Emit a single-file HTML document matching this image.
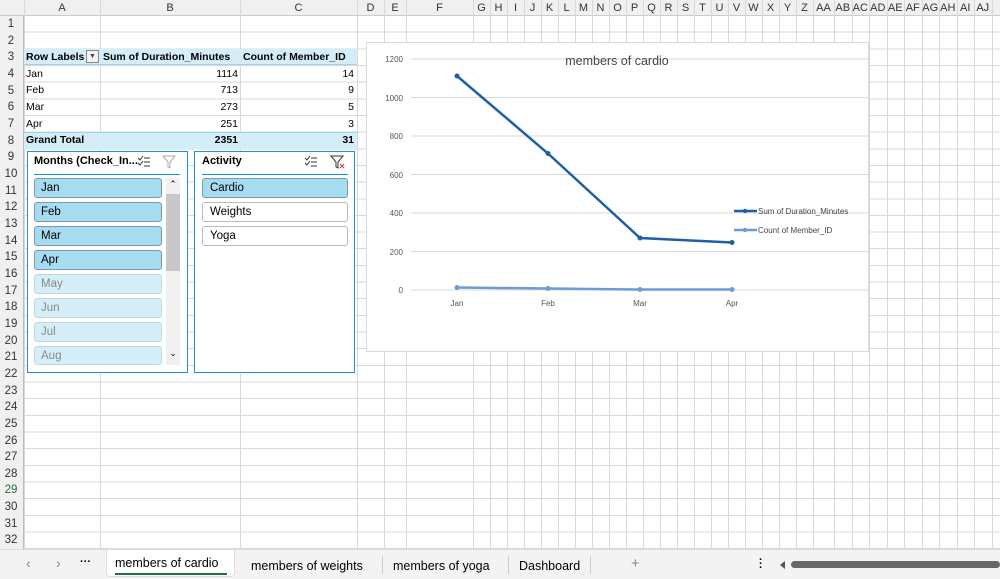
<!DOCTYPE html>
<html><head><meta charset="utf-8"><style>
*{margin:0;padding:0;box-sizing:border-box}
body{width:1000px;height:579px;overflow:hidden;background:#fff;font-family:"Liberation Sans",Arial,sans-serif;position:relative;font-size:11px;color:#000}
.a{position:absolute}
#grid{position:absolute;left:24px;top:16px;width:976px;height:533px;background:repeating-linear-gradient(to bottom,transparent 0,transparent 15.66px,#d9d9d9 15.66px,#d9d9d9 16.66px)}
.vl{position:absolute;top:0;width:1px;height:549px;background:#d9d9d9}
.ch{position:absolute;top:0;height:16px;line-height:16px;text-align:center;font-size:11px;color:#333}
.rh{position:absolute;left:0;width:22px;text-align:center;font-size:11.5px;color:#333;height:16.66px;line-height:16.66px}
.pt{position:absolute;font-size:10.5px;height:16px;line-height:16px}
.btn{position:absolute;left:34px;width:128px;height:20px;border:1px solid #7a9aa6;border-radius:3px;background:#a6dcf2;font-size:11.5px;line-height:18px;padding-left:6px}
.btn.o{background:#d5eff9;border-color:#c2d8e0;color:#888}
.btn2{position:absolute;left:202px;width:146px;height:20px;border:1px solid #bbb;border-radius:3px;background:#fff;font-size:11.5px;line-height:18px;padding-left:7px}
</style></head><body>
<div class="a" style="left:0;top:0;width:1000px;height:16px;background:#f0f0f0;border-bottom:1px solid #ccc"></div>
<div class="a" style="left:0;top:16px;width:24px;height:533px;background:#f0f0f0;border-right:1px solid #bbb"></div>
<div id="grid"></div>
<div id="cols"></div>
<div id="rows"></div>
<!-- pivot -->
<div class="a" style="left:24px;top:49px;width:333px;height:16px;background:#d4eef9;border-bottom:1px solid #9dd3ea"></div>
<div class="a" style="left:24px;top:132px;width:333px;height:17px;background:#d4eef9;border-top:1px solid #9dd3ea"></div>
<div class="pt" style="left:26px;top:49px;font-weight:bold">Row Labels</div>
<div class="a" style="left:86px;top:50px;width:13px;height:13px;border:1px solid #888;background:#f4f4f4;font-size:7px;text-align:center;line-height:12px;color:#444">▼</div>
<div class="pt" style="left:103px;top:49px;font-weight:bold">Sum of Duration_Minutes</div>
<div class="pt" style="left:243px;top:49px;font-weight:bold">Count of Member_ID</div>
<div class="pt" style="left:26px;top:66px">Jan</div><div class="pt" style="left:180px;width:58px;text-align:right;top:66px">1114</div><div class="pt" style="left:300px;width:54px;text-align:right;top:66px">14</div>
<div class="pt" style="left:26px;top:82px">Feb</div><div class="pt" style="left:180px;width:58px;text-align:right;top:82px">713</div><div class="pt" style="left:300px;width:54px;text-align:right;top:82px">9</div>
<div class="pt" style="left:26px;top:99px">Mar</div><div class="pt" style="left:180px;width:58px;text-align:right;top:99px">273</div><div class="pt" style="left:300px;width:54px;text-align:right;top:99px">5</div>
<div class="pt" style="left:26px;top:116px">Apr</div><div class="pt" style="left:180px;width:58px;text-align:right;top:116px">251</div><div class="pt" style="left:300px;width:54px;text-align:right;top:116px">3</div>
<div class="pt" style="left:26px;top:132px;font-weight:bold">Grand Total</div><div class="pt" style="left:180px;width:58px;text-align:right;top:132px;font-weight:bold">2351</div><div class="pt" style="left:300px;width:54px;text-align:right;top:132px;font-weight:bold">31</div>
<!-- slicer months -->
<div class="a" style="left:27px;top:151px;width:161px;height:222px;background:#fff;border:1px solid #1d93d0"></div>
<div class="a" style="left:34px;top:155px;font-weight:bold;font-size:11px">Months (Check_In...</div>
<svg class="a" style="left:137px;top:155px" width="14" height="13"><path d="M1 3l2 2 3-4M1 8l2 2 3-4M7 3h6M7 7h6M7 11h6" stroke="#333" fill="none"/></svg>
<svg class="a" style="left:162px;top:155px" width="14" height="14"><path d="M1 1h12l-5 6v6l-2-1V7z" stroke="#aaa" fill="none"/></svg>
<div class="a" style="left:34px;top:174px;width:146px;height:1px;background:#1d93d0"></div>
<div class="btn" style="top:178px">Jan</div>
<div class="btn" style="top:202px">Feb</div>
<div class="btn" style="top:226px">Mar</div>
<div class="btn" style="top:250px">Apr</div>
<div class="btn o" style="top:274px">May</div>
<div class="btn o" style="top:298px">Jun</div>
<div class="btn o" style="top:322px">Jul</div>
<div class="btn o" style="top:346px;height:19px">Aug</div>
<div class="a" style="left:166px;top:178px;width:14px;height:187px;background:#f0f0f0"></div>
<div class="a" style="left:166px;top:194px;width:14px;height:77px;background:#c8c8c8"></div>
<div class="a" style="left:166px;top:179px;width:14px;font-size:9px;text-align:center">⌃</div>
<div class="a" style="left:166px;top:348px;width:14px;font-size:9px;text-align:center">⌄</div>
<!-- slicer activity -->
<div class="a" style="left:194px;top:151px;width:161px;height:222px;background:#fff;border:1px solid #1d93d0"></div>
<div class="a" style="left:202px;top:155px;font-weight:bold;font-size:11px">Activity</div>
<svg class="a" style="left:304px;top:155px" width="14" height="13"><path d="M1 3l2 2 3-4M1 8l2 2 3-4M7 3h6M7 7h6M7 11h6" stroke="#333" fill="none"/></svg>
<svg class="a" style="left:330px;top:155px" width="16" height="15"><path d="M1 1h12l-5 6v6l-2-1V7z" stroke="#333" fill="none"/><path d="M10 9l4 4M14 9l-4 4" stroke="#d33"/></svg>
<div class="a" style="left:202px;top:174px;width:146px;height:1px;background:#1d93d0"></div>
<div class="btn2" style="top:178px;background:#a6dcf2;border-color:#7a9aa6">Cardio</div>
<div class="btn2" style="top:202px">Weights</div>
<div class="btn2" style="top:226px">Yoga</div>
<!-- chart -->
<div class="a" style="left:366px;top:42px;width:503px;height:310px;background:#fff;border:1px solid #d9d9d9"></div>
<svg class="a" style="left:366px;top:42px" width="503" height="310">
<g stroke="#d9d9d9"><line x1="45" x2="751" y1="17" y2="17"/><line x1="45" x2="751" y1="55.5" y2="55.5"/><line x1="45" x2="751" y1="94" y2="94"/><line x1="45" x2="751" y1="132.5" y2="132.5"/><line x1="45" x2="751" y1="171" y2="171"/><line x1="45" x2="751" y1="209.5" y2="209.5"/><line x1="45" x2="751" y1="248" y2="248"/></g>
<g font-family="Liberation Sans,sans-serif" font-size="8" fill="#555" text-anchor="end"><text x="37" y="20">1200</text><text x="37" y="59">1000</text><text x="37" y="97">800</text><text x="37" y="136">600</text><text x="37" y="174">400</text><text x="37" y="213">200</text><text x="37" y="251">0</text></g>
<g font-family="Liberation Sans,sans-serif" font-size="8" fill="#555" text-anchor="middle"><text x="91" y="264">Jan</text><text x="182" y="264">Feb</text><text x="274" y="264">Mar</text><text x="366" y="264">Apr</text></g>
<text x="251" y="23" font-family="Liberation Sans,sans-serif" font-size="12.5" fill="#444" text-anchor="middle">members of cardio</text>
<polyline points="91,34 182,111.5 274,196 366,200.5" stroke="#1f5fa3" stroke-width="2.5" fill="none"/>
<g fill="#1f5fa3"><circle cx="91" cy="34" r="2.5"/><circle cx="182" cy="111.5" r="2.5"/><circle cx="274" cy="196" r="2.5"/><circle cx="366" cy="200.5" r="2.5"/></g>
<polyline points="91,245.5 182,246.5 274,247.5 366,247.5" stroke="#6c9bd6" stroke-width="2.5" fill="none"/>
<g fill="#6c9bd6"><circle cx="91" cy="245.5" r="2.5"/><circle cx="182" cy="246.5" r="2.5"/><circle cx="274" cy="247.5" r="2.5"/><circle cx="366" cy="247.5" r="2.5"/></g>
<line x1="368" x2="391" y1="169" y2="169" stroke="#1f5fa3" stroke-width="2.5"/><circle cx="379" cy="169" r="2.2" fill="#1f5fa3"/>
<line x1="368" x2="391" y1="188" y2="188" stroke="#6c9bd6" stroke-width="2.5"/><circle cx="379" cy="188" r="2.2" fill="#6c9bd6"/>
<g font-family="Liberation Sans,sans-serif" font-size="8" fill="#444"><text x="392" y="172">Sum of Duration_Minutes</text><text x="392" y="191">Count of Member_ID</text></g>
</svg>
<!-- tab bar -->
<div class="a" style="left:0;top:549px;width:1000px;height:30px;background:#f3f3f3;border-top:1px solid #ddd"></div>
<div class="a" style="left:26px;top:555px;font-size:14px;color:#888">‹</div>
<div class="a" style="left:56px;top:555px;font-size:14px;color:#888">›</div>
<div class="a" style="left:80px;top:556px;font-size:11px;font-weight:bold">···</div>
<div class="a" style="left:106px;top:550px;width:129px;height:27px;background:#fff;border:1px solid #ddd;border-top:none;border-radius:0 0 4px 4px"></div>
<div class="a" style="left:115px;top:556px;font-size:12.5px">members of cardio</div>
<div class="a" style="left:115px;top:573px;width:112px;height:2px;background:#1e7145"></div>
<div class="a" style="left:251px;top:559px;font-size:12.5px">members of weights</div>
<div class="a" style="left:382px;top:556px;width:1px;height:18px;background:#ccc"></div>
<div class="a" style="left:393px;top:559px;font-size:12.5px">members of yoga</div>
<div class="a" style="left:508px;top:556px;width:1px;height:18px;background:#ccc"></div>
<div class="a" style="left:519px;top:559px;font-size:12.5px">Dashboard</div>
<div class="a" style="left:590px;top:556px;width:1px;height:18px;background:#ccc"></div>
<div class="a" style="left:631px;top:555px;font-size:15px;color:#888">+</div>
<div class="a" style="left:759px;top:558px;font-size:11px;font-weight:bold;line-height:4px">·<br>·<br>·</div>
<div class="a" style="left:780px;top:561px;width:0;height:0;border-top:4px solid transparent;border-bottom:4px solid transparent;border-right:5px solid #555"></div>
<div class="a" style="left:791px;top:561px;width:209px;height:7px;background:#666;border-radius:4px"></div>
<script>
var c=document.getElementById('cols'),r=document.getElementById('rows');
var xs=[24,100,240,357,384,406,473],names=['A','B','C','D','E','F'];
for(var i=1;i<=20;i++)xs.push(473+i*17);
var x=813;var nm2=['G','H','I','J','K','L','M','N','O','P','Q','R','S','T','U','V','W','X','Y','Z','AA','AB','AC','AD','AE','AF','AG','AH','AI','AJ'];
names=names.concat(nm2);
xs.push(834);for(x=851.5;x<1010;x+=17.5)xs.push(x);
var h='';
for(var i=0;i<xs.length;i++){h+='<div class="vl" style="left:'+xs[i]+'px"></div>';
 if(i<xs.length-1&&names[i])h+='<div class="ch" style="left:'+xs[i]+'px;width:'+(xs[i+1]-xs[i])+'px">'+names[i]+'</div>';}
c.innerHTML=h;
h='';for(var j=1;j<=32;j++){h+='<div class="rh" style="top:'+(16+(j-1)*16.66)+'px;'+(j==29?'color:#1e7145;':'')+'">'+j+'</div>';}
r.innerHTML=h;
</script>
</body></html>
